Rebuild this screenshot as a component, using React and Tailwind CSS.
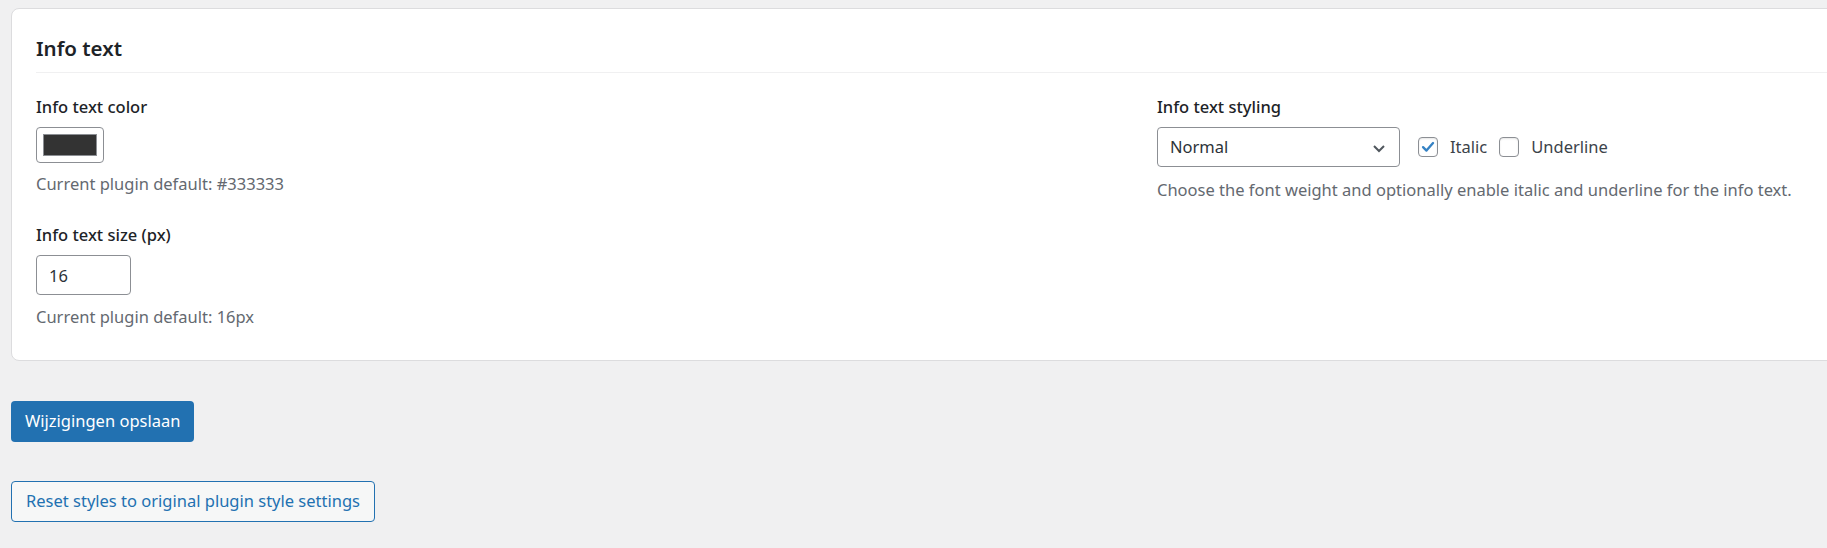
import React, { useState } from 'react';

const font = { fontFamily: '"Noto Sans", "Open Sans", sans-serif' };

function Checkbox({ checked, onChange, label }) {
  return (
    <label className="flex items-center cursor-pointer select-none">
      <span
        onClick={onChange}
        className="w-5 h-5 rounded-[4px] border border-[#8c8f94] bg-white flex items-center justify-center shadow-[inset_0_1px_2px_rgba(0,0,0,0.1)]"
      >
        {checked && (
          <svg viewBox="0 0 20 20" className="w-[18px] h-[18px]">
            <path d="M4.5 10.2 L8.3 14 L15.6 5.6" fill="none" stroke="#3582c4" strokeWidth="2.6" strokeLinecap="round" strokeLinejoin="round" />
          </svg>
        )}
      </span>
      <span className="ml-3 text-[16.5px] text-[#3c434a]">{label}</span>
    </label>
  );
}

export default function App() {
  const [italic, setItalic] = useState(true);
  const [underline, setUnderline] = useState(false);
  const [size, setSize] = useState('16');

  return (
    <div className="min-h-screen w-full overflow-hidden bg-[#f0f0f1] pt-[8px] pl-[11px]" style={font}>
      {/* Settings card */}
      <div className="w-[1900px] bg-white border border-[#dcdcde] rounded-[8px]">
        <div className="ml-[24px] pt-[25px] pb-[10px] border-b border-[#f0f0f1]">
          <h2 className="text-[20.5px] leading-[28px] font-semibold text-[#1d2327]">Info text</h2>
        </div>

        <div className="flex pl-[24px] pt-[22px] pb-[31px]">
          {/* Left column */}
          <div className="w-[1121px] shrink-0">
            <div className="text-[16.5px] leading-[24px] font-medium text-[#1d2327]">Info text color</div>
            <button className="mt-[8px] w-[68px] h-[36px] border border-[#8c8f94] rounded-[4px] bg-white flex items-center justify-center">
              <span className="block w-[54px] h-[22px] bg-[#333333] border border-[#8c8f94]" />
            </button>
            <p className="mt-[9px] text-[16.5px] leading-[24px] text-[#646970]">Current plugin default: #333333</p>

            <div className="mt-[27px] text-[16.5px] leading-[24px] font-medium text-[#1d2327]">Info text size (px)</div>
            <input
              value={size}
              onChange={(e) => setSize(e.target.value)}
              className="mt-[8px] block w-[95px] h-[40px] border border-[#8c8f94] rounded-[4px] px-[12px] text-[16.5px] text-[#2c3338] outline-none"
              style={font}
            />
            <p className="mt-[10px] text-[16.5px] leading-[24px] text-[#646970]">Current plugin default: 16px</p>
          </div>

          {/* Right column */}
          <div className="flex-1">
            <div className="text-[16.5px] leading-[24px] font-medium text-[#1d2327]">Info text styling</div>
            <div className="mt-[8px] flex items-center">
              <div className="relative w-[243px] h-[40px] border border-[#8c8f94] rounded-[4px] bg-white flex items-center pl-[12px]">
                <span className="text-[16.5px] text-[#2c3338]">Normal</span>
                <svg viewBox="0 0 16 16" className="absolute right-[12px] top-[12px] w-[16px] h-[16px]">
                  <path d="M3 6 L8 11 L13 6" fill="none" stroke="#50575e" strokeWidth="2" />
                </svg>
              </div>
              <div className="ml-[18px] flex items-center gap-[12px]">
                <Checkbox checked={italic} onChange={() => setItalic(!italic)} label="Italic" />
                <Checkbox checked={underline} onChange={() => setUnderline(!underline)} label="Underline" />
              </div>
            </div>
            <p className="mt-[11px] text-[16.5px] leading-[24px] text-[#646970]">
              Choose the font weight and optionally enable italic and underline for the info text.
            </p>
          </div>
        </div>
      </div>

      {/* Actions */}
      <button className="mt-[40px] block h-[41px] px-[14px] rounded-[4px] bg-[#2271b1] text-white text-[16.5px]" style={font}>
        Wijzigingen opslaan
      </button>
      <button className="mt-[39px] block h-[41px] px-[14px] rounded-[4px] border border-[#2271b1] bg-[#f6f7f7] text-[#2271b1] text-[16.5px]" style={font}>
        Reset styles to original plugin style settings
      </button>
    </div>
  );
}
